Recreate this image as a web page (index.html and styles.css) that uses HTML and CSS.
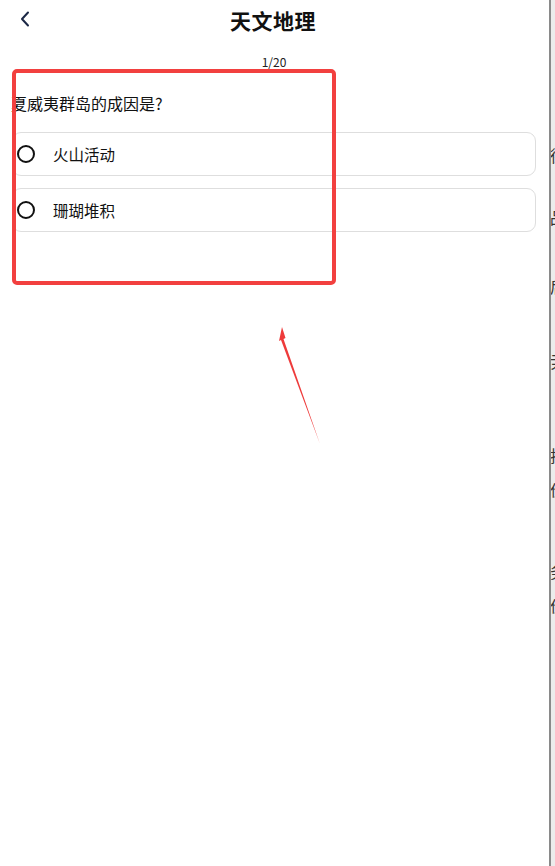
FILE: index.html
```html
<!DOCTYPE html>
<html lang="zh">
<head>
<meta charset="utf-8">
<title>天文地理</title>
<link rel="stylesheet" href="styles.css">
</head>
<body>
<div class="page">
  <header class="topbar">
    <button class="back" aria-label="返回">
      <svg width="10" height="16" viewBox="0 0 10 16"><path d="M8 1.5 L2 8 L8 14.5" fill="none" stroke="#1c2846" stroke-width="2" stroke-linecap="round" stroke-linejoin="round"/></svg>
    </button>
    <h1 class="title">天文地理</h1>
  </header>
  <div class="progress">1/20</div>
  <main class="quiz">
    <p class="question">夏威夷群岛的成因是?</p>
    <ul class="options">
      <li class="option"><span class="radio"></span><span class="label">火山活动</span></li>
      <li class="option"><span class="radio"></span><span class="label">珊瑚堆积</span></li>
    </ul>
  </main>
</div>
<div class="highlight"></div>
<svg class="arrow" width="60" height="130" viewBox="0 0 60 130">
  <polygon points="20,9 23.5,20 21.5,21 58,126 19,22 17,23" fill="#ee3b3b"/>
</svg>
<aside class="sidestrip">
  <span style="top:146px">徐</span>
  <span style="top:208px">品</span>
  <span style="top:277px">后</span>
  <span style="top:352px">尹</span>
  <span style="top:446px">拉</span>
  <span style="top:480px">价</span>
  <span style="top:562px">务</span>
  <span style="top:596px">价</span>
</aside>
</body>
</html>
```
FILE: styles.css
```css
* { box-sizing: border-box; }
html, body { margin: 0; padding: 0; background: #fff; }
body {
  width: 555px;
  height: 866px;
  overflow: hidden;
  position: relative;
  font-family: "Noto Sans CJK SC", "Noto Sans", sans-serif;
  color: #111;
}
.page { width: 550px; }
.topbar {
  height: 40px;
  display: flex;
  align-items: center;
  justify-content: center;
  position: relative;
}
.back {
  position: absolute;
  left: 15px;
  top: 8px;
  width: 20px;
  height: 22px;
  border: 0;
  background: none;
  padding: 0;
  display: flex;
  align-items: center;
  justify-content: center;
}
.title {
  margin: 0;
  font-size: 21px;
  font-weight: 700;
  line-height: 40px;
  letter-spacing: 0.5px;
  color: #111;
  transform: translateX(-2px);
}
.progress {
  margin-top: 14px;
  text-align: center;
  font-size: 12px;
  line-height: 16px;
  color: #222;
  transform: translateX(-1px);
}
.quiz { padding: 0 15px 0 12px; }
.question {
  margin: 22px 0 0 -1px;
  font-size: 16px;
  line-height: 22px;
  color: #111;
}
.options {
  list-style: none;
  margin: 18px 0 0 0;
  padding: 0;
  display: flex;
  flex-direction: column;
  gap: 12px;
  width: 524px;
}
.option {
  height: 44px;
  border: 1px solid #dedede;
  border-radius: 9px;
  display: flex;
  align-items: center;
  padding-left: 4px;
  background: #fff;
}
.radio {
  width: 18px;
  height: 18px;
  border: 2px solid #111;
  border-radius: 50%;
  flex: none;
}
.label {
  margin-left: 18px;
  font-size: 15.5px;
  color: #111;
}
.highlight {
  position: absolute;
  left: 12px;
  top: 69px;
  width: 324px;
  height: 216px;
  border: 4px solid #f2403f;
  border-radius: 5px;
}
.arrow {
  position: absolute;
  left: 262px;
  top: 318px;
}
.sidestrip {
  position: absolute;
  left: 549px;
  top: 0;
  width: 6px;
  height: 866px;
  background: #ececec;
  border-left: 2px solid #8a8a8a;
  overflow: hidden;
}
.sidestrip span {
  position: absolute;
  left: -1px;
  font-size: 16px;
  line-height: 18px;
  color: #333;
}
```
